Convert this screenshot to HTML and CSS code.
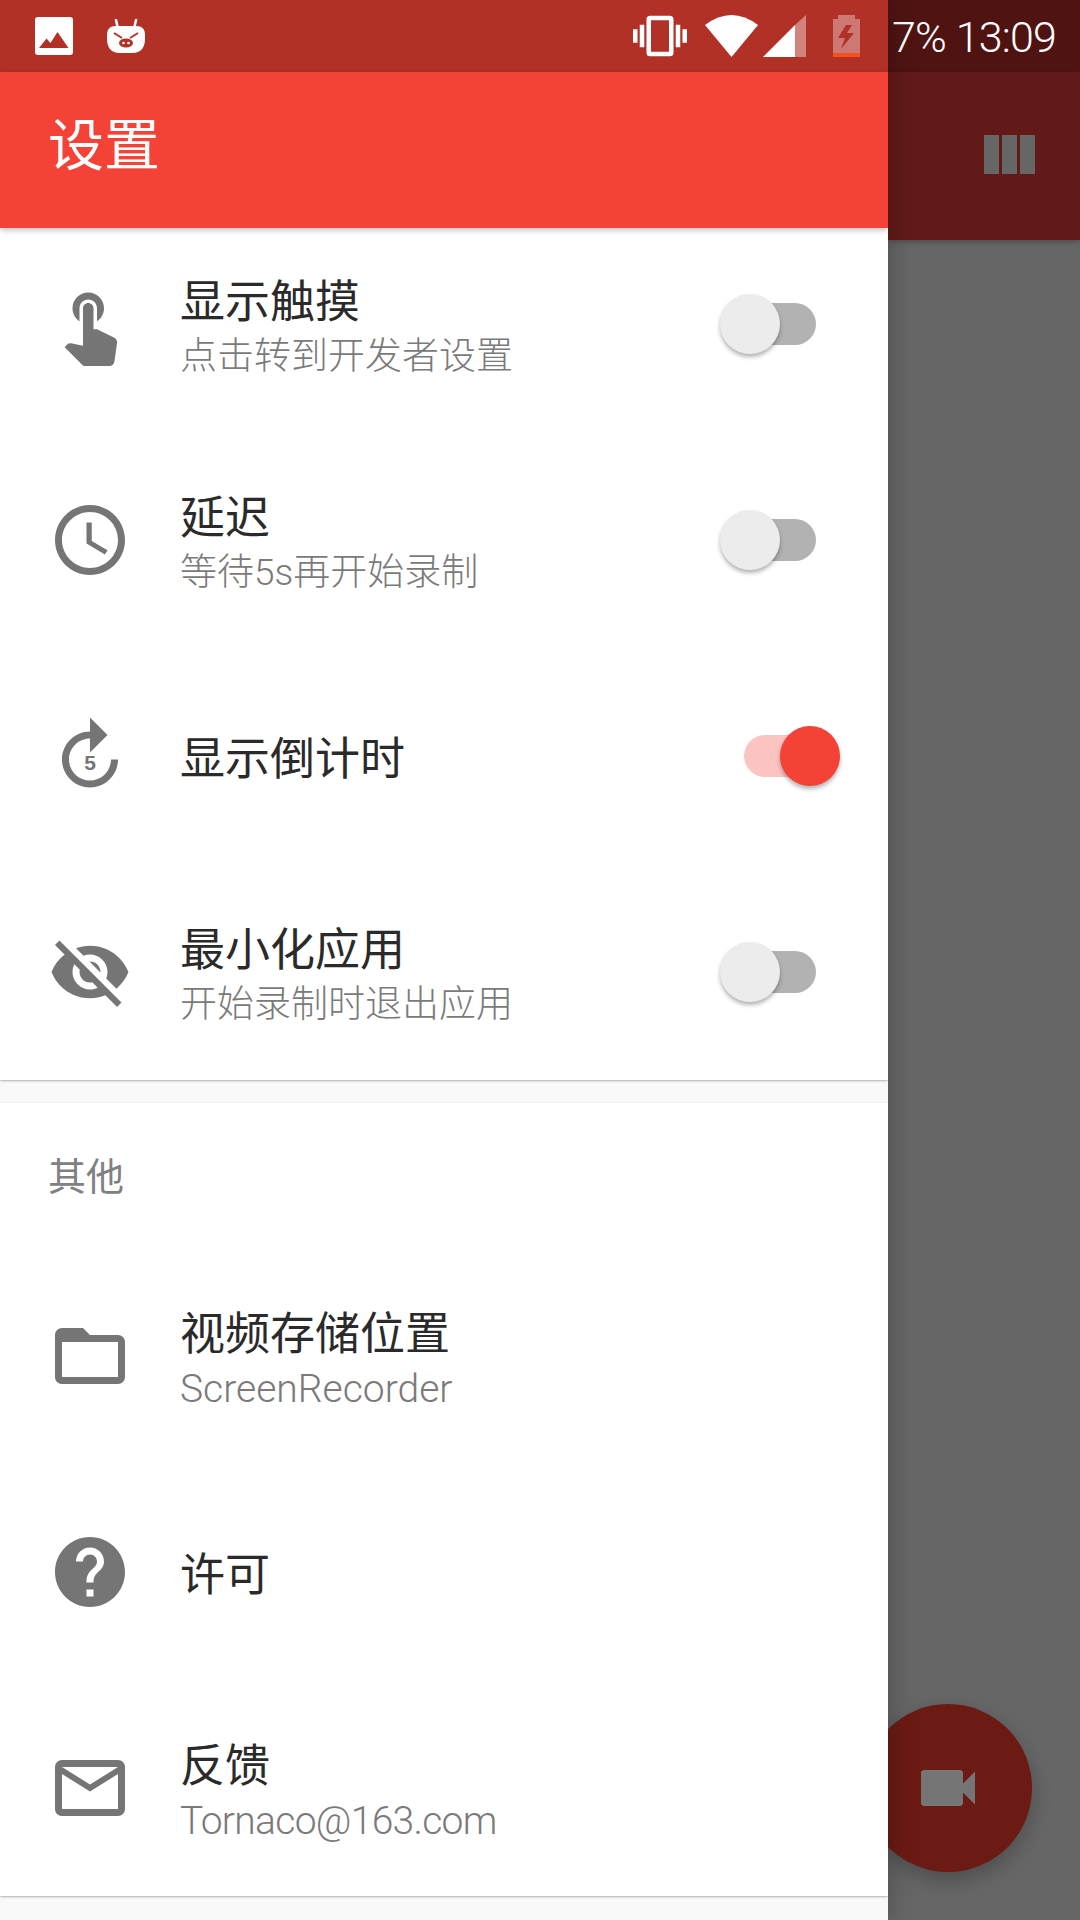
FILE: index.html
```html
<!DOCTYPE html>
<html lang="zh-CN">
<head>
    <meta charset="UTF-8">
    <meta name="viewport" content="width=device-width, initial-scale=1.0">
    <title>设置</title>
    <link rel="stylesheet" href="styles.css">
</head>
<body>
    <!-- Settings drawer -->
    <div class="drawer">
        <div class="status-bar">
            <svg class="st-image" viewBox="0 0 38 38"><rect width="38" height="38" rx="3" fill="#fff"/><path d="M4 31l7.500-9.500 4 4.500 7-11 11 16z" fill="#b23127"/></svg>
            <svg class="st-pig" viewBox="0 0 38 34"><path d="M11 10L9 1M27 10l2-9" stroke="#fff" stroke-width="2.500" stroke-linecap="round"/><path d="M9 7h20c6 0 9 3 9 9v4c0 9-5 14-12 14H12C5 34 0 29 0 20v-4c0-6 3-9 9-9z" fill="#fff"/><path d="M7 14l8 5M31 14l-8 5" stroke="#b23127" stroke-width="2"/><ellipse cx="19" cy="24" rx="7" ry="4.500" fill="#b23127"/><circle cx="16.500" cy="24" r="1.300" fill="#fff"/><circle cx="21.500" cy="24" r="1.300" fill="#fff"/></svg>
            <div class="status-spacer"></div>
            <svg class="st-vibrate" viewBox="0 0 24 24"><path d="M0 15h2V9H0v6zm3 2h2V7H3v10zm19-8v6h2V9h-2zm-3 8h2V7h-2v10zM16.500 3h-9C6.670 3 6 3.670 6 4.500v15c0 .83.67 1.500 1.500 1.500h9c.83 0 1.500-.67 1.500-1.500v-15c0-.83-.67-1.500-1.500-1.500zM16 19H8V5h8v14z" fill="#fff"/></svg>
            <svg class="st-wifi" viewBox="0 0 53 42"><path d="M0 10Q26.500-10 53 10L26.500 42z" fill="#fff"/></svg>
            <svg class="st-signal" viewBox="0 0 43 42"><path d="M32 10L43 0v42H32z" fill="#fff" fill-opacity=".4"/><path d="M0 42L32 10v32z" fill="#fff"/></svg>
            <svg class="st-battery" viewBox="0 0 27 42"><path d="M5 0h17v4h5v38H0V4h5z" fill="#fff" fill-opacity=".35"/><rect y="38" width="27" height="4" fill="#f4511e"/><path d="M13 10L5 23h7l-4 11 13-16h-7l5-8z" fill="#b23127"/></svg>
        </div>
        <div class="toolbar">设置</div>

        <div class="list">
            <div class="card">
                <div class="row">
                    <svg class="row-icon" viewBox="0 0 24 24"><path d="M9 11.240V7.500C9 6.120 10.120 5 11.500 5S14 6.120 14 7.500v3.740c1.210-.81 2-2.180 2-3.740C16 5.010 13.990 3 11.500 3S7 5.010 7 7.500c0 1.560.79 2.930 2 3.740zm9.840 4.630l-4.540-2.260c-.17-.07-.35-.11-.54-.11H13v-6c0-.83-.67-1.500-1.500-1.500S10 6.670 10 7.500v10.740l-3.430-.72c-.08-.01-.15-.03-.24-.03-.31 0-.59.13-.79.33l-.79.8 4.940 4.940c.27.27.65.44 1.060.44h6.790c.75 0 1.330-.55 1.440-1.280l.75-5.270c.01-.07.02-.14.02-.2 0-.62-.38-1.160-.91-1.380z"/></svg>
                    <div class="row-text">
                        <div class="row-title">显示触摸</div>
                        <div class="row-sub">点击转到开发者设置</div>
                    </div>
                    <div class="switch"><div class="track"></div><div class="thumb"></div></div>
                </div>
                <div class="row">
                    <svg class="row-icon" viewBox="0 0 24 24"><path d="M11.990 2C6.470 2 2 6.480 2 12s4.470 10 9.990 10C17.520 22 22 17.520 22 12S17.520 2 11.990 2zM12 20c-4.420 0-8-3.580-8-8s3.580-8 8-8 8 3.580 8 8-3.580 8-8 8z"/><path d="M12.500 7H11v6l5.250 3.150.75-1.230-4.500-2.670z"/></svg>
                    <div class="row-text">
                        <div class="row-title">延迟</div>
                        <div class="row-sub">等待5s再开始录制</div>
                    </div>
                    <div class="switch"><div class="track"></div><div class="thumb"></div></div>
                </div>
                <div class="row">
                    <svg class="row-icon" viewBox="0 0 24 24"><path d="M4 13c0 4.400 3.600 8 8 8s8-3.600 8-8h-2c0 3.300-2.700 6-6 6s-6-2.700-6-6 2.700-6 6-6v4l5-5-5-5v4c-4.400 0-8 3.600-8 8z"/><text class="icon-digit" x="12" y="16.100" text-anchor="middle">5</text></svg>
                    <div class="row-text">
                        <div class="row-title">显示倒计时</div>
                    </div>
                    <div class="switch switch-on"><div class="track"></div><div class="thumb"></div></div>
                </div>
                <div class="row">
                    <svg class="row-icon" viewBox="0 0 24 24"><path d="M12 7c2.760 0 5 2.240 5 5 0 .65-.13 1.260-.36 1.830l2.920 2.920c1.510-1.260 2.700-2.890 3.430-4.750-1.730-4.390-6-7.500-11-7.500-1.400 0-2.740.25-3.980.7l2.160 2.160C10.740 7.130 11.350 7 12 7zM2 4.270l2.280 2.280.46.46C3.080 8.300 1.780 10.020 1 12c1.730 4.390 6 7.500 11 7.500 1.550 0 3.030-.3 4.380-.84l.42.42L19.730 22 21 20.730 3.270 3 2 4.270zM7.530 9.800l1.550 1.550c-.05.21-.08.43-.08.65 0 1.660 1.340 3 3 3 .22 0 .44-.03.65-.08l1.550 1.550c-.67.33-1.410.53-2.200.53-2.760 0-5-2.240-5-5 0-.79.2-1.530.53-2.200zm4.310-.78l3.150 3.150.02-.16c0-1.660-1.340-3-3-3l-.17.01z"/></svg>
                    <div class="row-text">
                        <div class="row-title">最小化应用</div>
                        <div class="row-sub">开始录制时退出应用</div>
                    </div>
                    <div class="switch"><div class="track"></div><div class="thumb"></div></div>
                </div>
            </div>

            <div class="card">
                <div class="section-title">其他</div>
                <div class="row">
                    <svg class="row-icon" viewBox="0 0 24 24"><path d="M20 6h-8l-2-2H4c-1.100 0-1.990.9-1.990 2L2 18c0 1.100.9 2 2 2h16c1.100 0 2-.9 2-2V8c0-1.100-.9-2-2-2zm0 12H4V8h16v10z"/></svg>
                    <div class="row-text">
                        <div class="row-title">视频存储位置</div>
                        <div class="row-sub sub-latin">ScreenRecorder</div>
                    </div>
                </div>
                <div class="row">
                    <svg class="row-icon" viewBox="0 0 24 24"><path d="M12 2C6.480 2 2 6.480 2 12s4.480 10 10 10 10-4.480 10-10S17.520 2 12 2zm1 17h-2v-2h2v2zm2.070-7.750l-.9.92C13.450 12.900 13 13.500 13 15h-2v-.5c0-1.100.45-2.100 1.170-2.830l1.240-1.260c.37-.36.59-.86.59-1.410 0-1.100-.9-2-2-2s-2 .9-2 2H8c0-2.210 1.790-4 4-4s4 1.790 4 4c0 .88-.36 1.680-.93 2.250z"/></svg>
                    <div class="row-text">
                        <div class="row-title">许可</div>
                    </div>
                </div>
                <div class="row">
                    <svg class="row-icon" viewBox="0 0 24 24"><path d="M20 4H4c-1.100 0-1.990.9-1.990 2L2 18c0 1.100.9 2 2 2h16c1.100 0 2-.9 2-2V6c0-1.100-.9-2-2-2zm0 14H4V8l8 5 8-5v10zm-8-7L4 6h16l-8 5z"/></svg>
                    <div class="row-text">
                        <div class="row-title">反馈</div>
                        <div class="row-sub sub-latin sub-mail">Tornaco@163.com</div>
                    </div>
                </div>
            </div>
        </div>
    </div>

    <!-- Dimmed page behind the drawer -->
    <div class="scrim">
        <div class="scrim-status">7% 13:09</div>
        <div class="scrim-appbar">
            <svg class="appbar-icon" viewBox="0 0 24 24"><path d="M10 18h5V5h-5v13zm-6 0h5V5H4v13zM16 5v13h5V5h-5z"/></svg>
        </div>
        <div class="fab">
            <svg class="fab-icon" viewBox="0 0 24 24"><path d="M17 10.500V7c0-.55-.45-1-1-1H4c-.55 0-1 .45-1 1v10c0 .55.45 1 1 1h12c.55 0 1-.45 1-1v-3.500l4 4v-11l-4 4z"/></svg>
        </div>
    </div>
</body>
</html>
```

FILE: styles.css
```css
body {
    margin: 0;
    width: 1080px;
    height: 1920px;
    display: flex;
    overflow: hidden;
    font-family: Roboto, "Noto Sans CJK SC", sans-serif;
    background-color: #666666;
}
/* Drawer */
.drawer {
    position: relative;
    z-index: 1;
    width: 888px;
    height: 1920px;
    flex-shrink: 0;
    display: flex;
    flex-direction: column;
    overflow: hidden;
    background-color: #f9f9f9;
    box-shadow: 0 0 24px rgba(0, 0, 0, 0.25);
}
.status-bar {
    height: 72px;
    flex-shrink: 0;
    display: flex;
    align-items: center;
    padding: 0 28px 0 35px;
    background-color: #b23127;
}
.status-bar svg {
    display: block;
    flex-shrink: 0;
}
.status-spacer {
    flex: 1;
}
.st-image {
    width: 38px;
    height: 38px;
}
.st-pig {
    width: 38px;
    height: 34px;
    margin-left: 34px;
}
.st-vibrate {
    width: 54px;
    height: 54px;
}
.st-wifi {
    width: 53px;
    height: 42px;
    margin-left: 18px;
}
.st-signal {
    width: 43px;
    height: 42px;
    margin-left: 5px;
}
.st-battery {
    width: 27px;
    height: 42px;
    margin-left: 27px;
}
.toolbar {
    position: relative;
    z-index: 2;
    height: 156px;
    flex-shrink: 0;
    padding-left: 48px;
    line-height: 148px;
    font-size: 56px;
    color: #ffffff;
    background-color: #f44336;
    box-shadow: 0 2px 6px rgba(0, 0, 0, 0.25);
}
/* List is scrolled a little, so the first row sits under the toolbar */
.list {
    margin-top: -12px;
    display: flex;
    flex-direction: column;
    gap: 23px;
}
.card {
    background-color: #ffffff;
    box-shadow: 0 1px 2px rgba(0, 0, 0, 0.3);
}
.row {
    height: 216px;
    display: flex;
    align-items: center;
    padding: 0 48px;
}
.row-icon {
    width: 84px;
    height: 84px;
    flex-shrink: 0;
    fill: #757575;
}
.icon-digit {
    font-family: "Liberation Sans", sans-serif;
    font-size: 6px;
    font-weight: bold;
}
.row-text {
    flex: 1;
    margin-left: 48px;
    padding-top: 8px;
}
.row-title {
    font-size: 45px;
    line-height: 54px;
    color: #2a2a2a;
}
.row-sub {
    margin-bottom: -3px;
    font-size: 37px;
    line-height: 54px;
    font-weight: 300;
    color: #7a7a7a;
}
.sub-latin {
    font-size: 39px;
}
.sub-mail {
    letter-spacing: -0.7px;
}
.section-title {
    height: 145px;
    padding-left: 48px;
    line-height: 148px;
    font-size: 38px;
    color: #808080;
}
/* Switches */
.switch {
    position: relative;
    width: 120px;
    height: 60px;
    flex-shrink: 0;
    display: flex;
    align-items: center;
    justify-content: center;
}
.track {
    width: 72px;
    height: 42px;
    border-radius: 21px;
    background-color: #b2b2b2;
}
.thumb {
    position: absolute;
    top: 0;
    left: 0;
    width: 60px;
    height: 60px;
    border-radius: 50%;
    background-color: #ececec;
    box-shadow: 0 3px 4px rgba(0, 0, 0, 0.3);
}
.switch-on .track {
    background-color: #fcc4c1;
}
.switch-on .thumb {
    left: 60px;
    background-color: #f44336;
}
/* Behind the drawer */
.scrim {
    position: relative;
    flex: 1;
    min-width: 0;
    overflow: hidden;
}
.scrim-status {
    height: 72px;
    padding-left: 4px;
    line-height: 74px;
    font-size: 43px;
    font-weight: 300;
    letter-spacing: -0.8px;
    color: #ffffff;
    white-space: nowrap;
    background-color: #4f1412;
}
.scrim-appbar {
    height: 168px;
    display: flex;
    align-items: center;
    justify-content: flex-end;
    padding-right: 36px;
    background-color: #611a17;
    box-shadow: 0 2px 6px rgba(0, 0, 0, 0.25);
}
.appbar-icon {
    width: 72px;
    height: 72px;
    fill: #666666;
}
.fab {
    position: absolute;
    top: 1704px;
    left: -24px;
    width: 168px;
    height: 168px;
    display: flex;
    align-items: center;
    justify-content: center;
    border-radius: 50%;
    background-color: #6b1a14;
    box-shadow: 0 8px 20px rgba(0, 0, 0, 0.25);
}
.fab-icon {
    width: 72px;
    height: 72px;
    fill: #757575;
}
```
